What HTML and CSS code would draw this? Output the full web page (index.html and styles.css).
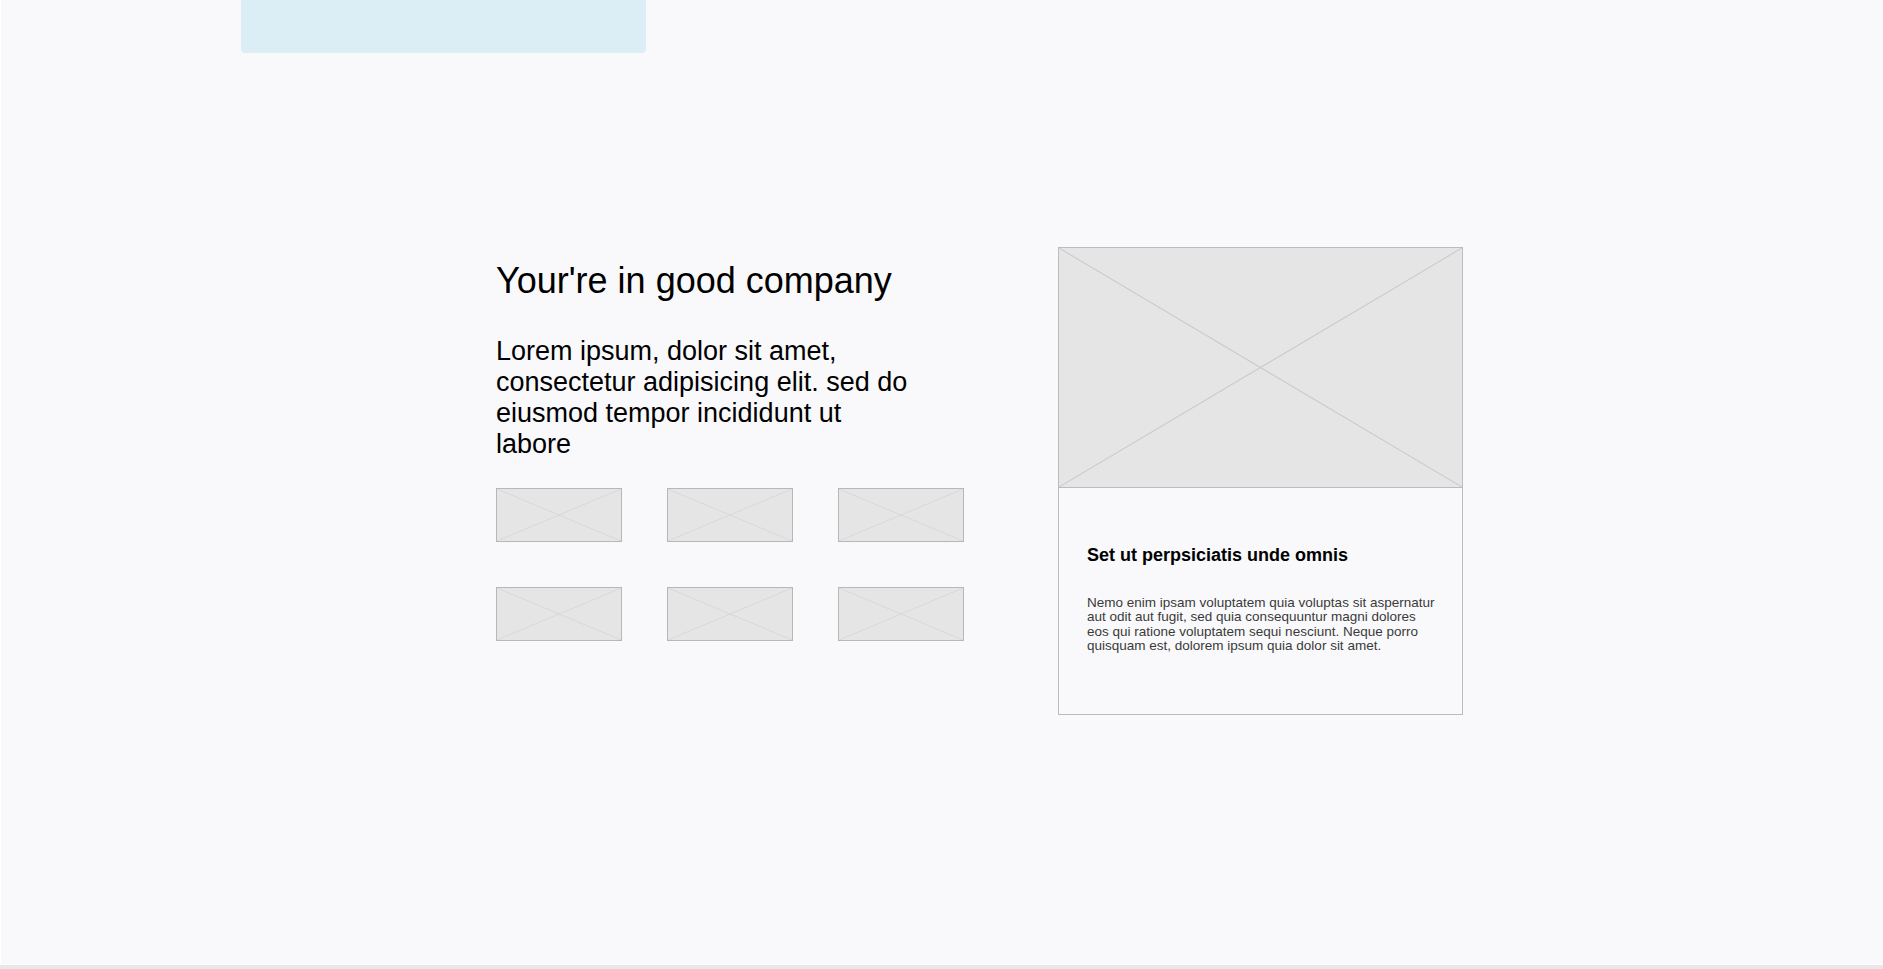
FILE: index.html
```html
<!DOCTYPE html>
<html lang="en">
<head>
<meta charset="utf-8">
<title>Your're in good company</title>
<link rel="stylesheet" href="styles.css">
</head>
<body>
<div class="page">
  <div class="topbar"></div>
  <section class="company">
    <div class="intro">
      <h1 class="title">Your're in good company</h1>
      <p class="lead">Lorem ipsum, dolor sit amet, consectetur adipisicing elit. sed do eiusmod tempor incididunt ut labore</p>
      <div class="logos">
        <div class="ph thumb"><svg viewBox="0 0 100 100" preserveAspectRatio="none"><line x1="0" y1="0" x2="100" y2="100"/><line x1="100" y1="0" x2="0" y2="100"/></svg></div>
        <div class="ph thumb"><svg viewBox="0 0 100 100" preserveAspectRatio="none"><line x1="0" y1="0" x2="100" y2="100"/><line x1="100" y1="0" x2="0" y2="100"/></svg></div>
        <div class="ph thumb"><svg viewBox="0 0 100 100" preserveAspectRatio="none"><line x1="0" y1="0" x2="100" y2="100"/><line x1="100" y1="0" x2="0" y2="100"/></svg></div>
        <div class="ph thumb"><svg viewBox="0 0 100 100" preserveAspectRatio="none"><line x1="0" y1="0" x2="100" y2="100"/><line x1="100" y1="0" x2="0" y2="100"/></svg></div>
        <div class="ph thumb"><svg viewBox="0 0 100 100" preserveAspectRatio="none"><line x1="0" y1="0" x2="100" y2="100"/><line x1="100" y1="0" x2="0" y2="100"/></svg></div>
        <div class="ph thumb"><svg viewBox="0 0 100 100" preserveAspectRatio="none"><line x1="0" y1="0" x2="100" y2="100"/><line x1="100" y1="0" x2="0" y2="100"/></svg></div>
      </div>
    </div>
    <article class="card">
      <div class="ph card-img"><svg viewBox="0 0 100 100" preserveAspectRatio="none"><line x1="0" y1="0" x2="100" y2="100"/><line x1="100" y1="0" x2="0" y2="100"/></svg></div>
      <div class="card-body">
        <h2 class="card-title">Set ut perpsiciatis unde omnis</h2>
        <p class="card-text">Nemo enim ipsam voluptatem quia voluptas sit aspernatur aut odit aut fugit, sed quia consequuntur magni dolores eos qui ratione voluptatem sequi nesciunt. Neque porro quisquam est, dolorem ipsum quia dolor sit amet.</p>
      </div>
    </article>
  </section>
</div>
</body>
</html>
```

FILE: styles.css
```css
* { box-sizing: border-box; }
html, body { margin: 0; padding: 0; }
body {
  background: #e8e8e8;
  font-family: "Liberation Sans", Arial, sans-serif;
  color: #000;
}
.page {
  height: 965px;
  background: #f9f9fb;
  border-left: 1px solid #ffffff;
  border-bottom: 1px solid #fdfdfd;
  display: flex;
  flex-direction: column;
}
.topbar {
  margin-left: 240px;
  width: 405px;
  height: 53px;
  background: #dbeef5;
  border-radius: 0 0 4px 4px;
}
.company {
  display: flex;
  align-items: flex-start;
  gap: 94px;
  margin-top: 194px;
  margin-left: 495px;
}
.intro {
  width: 468px;
  padding-top: 13px;
}
.title {
  margin: 0;
  font-size: 36px;
  font-weight: 400;
  line-height: 41px;
}
.lead {
  margin: 35px 0 0;
  max-width: 420px;
  font-size: 27px;
  line-height: 31px;
}
.logos {
  margin-top: 28px;
  display: grid;
  grid-template-columns: repeat(3, 126px);
  grid-auto-rows: 54px;
  column-gap: 45px;
  row-gap: 45px;
}
.ph {
  background: #e5e5e5;
  position: relative;
}
.ph svg {
  display: block;
  width: 100%;
  height: 100%;
}
.ph line {
  vector-effect: non-scaling-stroke;
  stroke-width: 1;
}
.thumb {
  border: 1px solid #b7b7b7;
}
.thumb line { stroke: #d8d8d8; }
.card {
  width: 405px;
  border: 1px solid #bcbcbc;
  background: #f9f9fb;
}
.card-img {
  height: 240px;
  border-bottom: 1px solid #bcbcbc;
}
.card-img line { stroke: #c9c9c9; }
.card-body {
  height: 226px;
  padding: 57px 27px 0 28px;
}
.card-title {
  margin: 0;
  font-size: 18px;
  font-weight: 700;
  line-height: normal;
}
.card-text {
  margin: 30px 0 0;
  font-size: 13.5px;
  line-height: 14.3px;
  color: #3a3a3a;
}
```
